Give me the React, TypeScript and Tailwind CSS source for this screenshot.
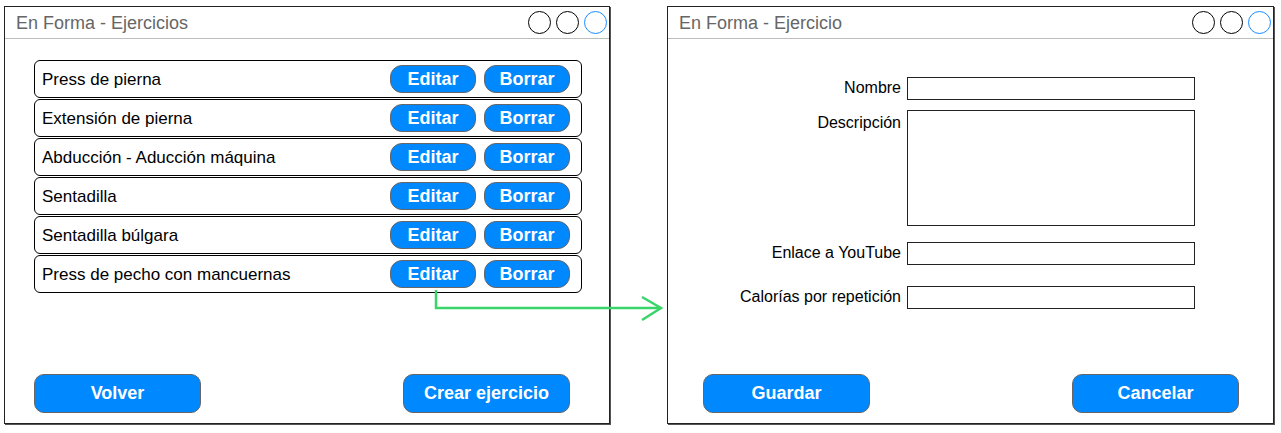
import React from 'react';

const exercises = [
  'Press de pierna',
  'Extensión de pierna',
  'Abducción - Aducción máquina',
  'Sentadilla',
  'Sentadilla búlgara',
  'Press de pecho con mancuernas',
];

function TitleBar({ title }: { title: string }) {
  return (
    <div className="h-[32px] shrink-0 border-b border-[#bdbdbd] flex items-center justify-between pl-[11px] pr-[2px]">
      <span className="pt-[2px] text-[18px] text-[#666666]">{title}</span>
      <div className="flex gap-[5px]">
        <span className="w-[23px] h-[23px] rounded-full border border-black" />
        <span className="w-[23px] h-[23px] rounded-full border border-black" />
        <span className="w-[23px] h-[23px] rounded-full border border-[#1a8cff]" />
      </div>
    </div>
  );
}

function BigButton({ label }: { label: string }) {
  return (
    <button className="w-[167px] h-[39px] rounded-[10px] border border-[#666666] bg-[#0088ff] text-white font-bold text-[18px]">
      {label}
    </button>
  );
}

function SmallButton({ label }: { label: string }) {
  return (
    <button className="w-[86px] h-[28px] rounded-[12px] border border-[#666666] bg-[#0088ff] text-white font-bold text-[18px] leading-none">
      {label}
    </button>
  );
}

function Field({ label, tall, className }: { label: string; tall?: boolean; className?: string }) {
  return (
    <div className={`flex ${tall ? 'items-start' : 'items-center'} ${className ?? ''}`}>
      <span className={`w-[239px] pr-[6px] text-right text-[16px] text-black ${tall ? 'pt-[1px]' : ''}`}>{label}</span>
      <div className={`w-[288px] border border-[#222] ${tall ? 'h-[116px]' : 'h-[23px]'}`} />
    </div>
  );
}

export default function App() {
  return (
    <div className="relative w-[1281px] h-[433px] bg-white font-['Liberation_Sans',Arial,sans-serif]">
      <div className="flex gap-[57px] pl-[4px] pt-[6px]">
        {/* list window */}
        <div className="w-[606px] h-[418px] border border-[#222] shadow-[1px_1px_0_#555] flex flex-col">
          <TitleBar title="En Forma - Ejercicios" />
          <div className="mt-[21px] ml-[29px] w-[548px] flex flex-col gap-[1px]">
            {exercises.map((name) => (
              <div key={name} className="h-[38px] rounded-[6px] border border-black flex items-center pl-[7px] pr-[11px]">
                <span className="flex-1 pt-[1px] text-[17px] text-black">{name}</span>
                <div className="flex gap-[8px]">
                  <SmallButton label="Editar" />
                  <SmallButton label="Borrar" />
                </div>
              </div>
            ))}
          </div>
          <div className="mt-auto mb-[10px] flex justify-between pl-[29px] pr-[39px]">
            <BigButton label="Volver" />
            <BigButton label="Crear ejercicio" />
          </div>
        </div>

        {/* edit window */}
        <div className="w-[607px] h-[418px] border border-[#222] shadow-[1px_1px_0_#555] flex flex-col">
          <TitleBar title="En Forma - Ejercicio" />
          <div className="mt-[37px] flex flex-col">
            <Field label="Nombre" />
            <Field label="Descripción" tall className="mt-[10px]" />
            <Field label="Enlace a YouTube" className="mt-[15px]" />
            <Field label="Calorías por repetición" className="mt-[20px]" />
          </div>
          <div className="mt-auto mb-[10px] flex justify-between pl-[35px] pr-[34px]">
            <BigButton label="Guardar" />
            <BigButton label="Cancelar" />
          </div>
        </div>
      </div>

      <svg className="absolute inset-0 pointer-events-none" width="1281" height="433">
        <path d="M436 290 V308 H660" fill="none" stroke="#3ad56a" strokeWidth="2.5" />
        <path d="M642 297 L661 308 L642 320" fill="none" stroke="#3ad56a" strokeWidth="2.5" />
      </svg>
    </div>
  );
}
